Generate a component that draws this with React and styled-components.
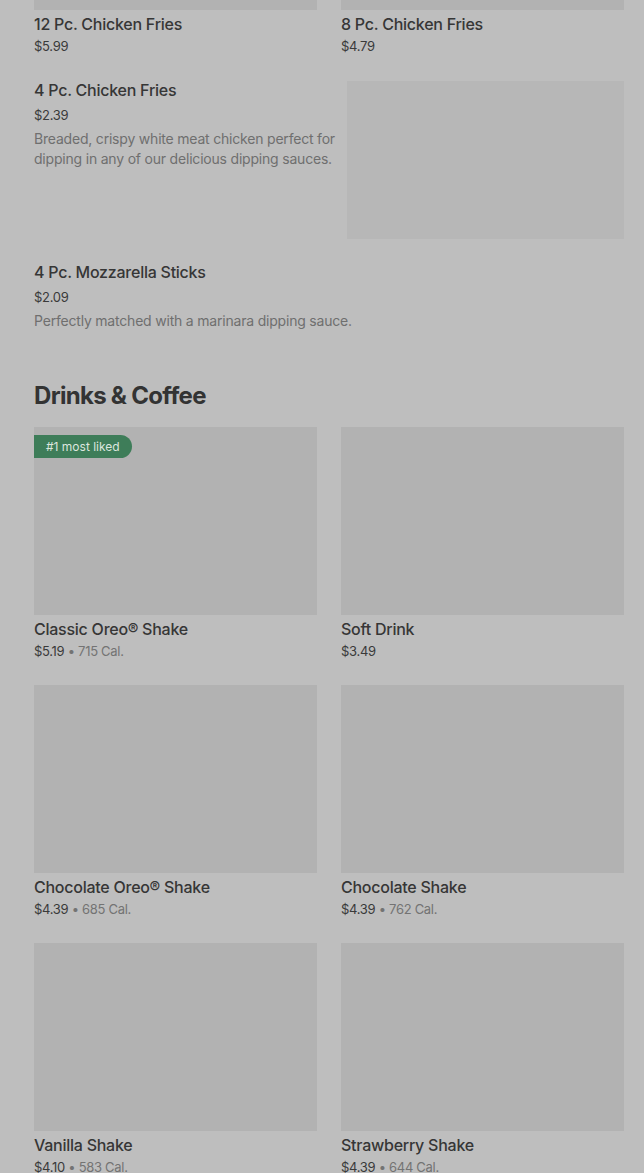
import React from 'react';
import styled, { createGlobalStyle } from 'styled-components';

const GlobalStyle = createGlobalStyle`
  html, body {
    margin: 0;
    padding: 0;
    background: #bebebe;
    overflow: hidden;
  }
  body {
    font-family: Inter, "Noto Sans", "Liberation Sans", sans-serif;
    color: #383838;
  }
`;

const topRow = [
  { name: '12 Pc. Chicken Fries', price: '$5.99' },
  { name: '8 Pc. Chicken Fries', price: '$4.79' },
];

const listItems = [
  {
    name: '4 Pc. Chicken Fries',
    price: '$2.39',
    desc: 'Breaded, crispy white meat chicken perfect for dipping in any of our delicious dipping sauces.',
    image: true,
  },
  {
    name: '4 Pc. Mozzarella Sticks',
    price: '$2.09',
    desc: 'Perfectly matched with a marinara dipping sauce.',
    image: false,
  },
];

const drinks = [
  { name: 'Classic Oreo® Shake', price: '$5.19', cal: '715 Cal.', badge: '#1 most liked' },
  { name: 'Soft Drink', price: '$3.49' },
  { name: 'Chocolate Oreo® Shake', price: '$4.39', cal: '685 Cal.' },
  { name: 'Chocolate Shake', price: '$4.39', cal: '762 Cal.' },
  { name: 'Vanilla Shake', price: '$4.10', cal: '583 Cal.' },
  { name: 'Strawberry Shake', price: '$4.39', cal: '644 Cal.' },
];

function Card({ item }) {
  return (
    <CardBox>
      <Thumb>
        {item.badge && <Badge>{item.badge}</Badge>}
      </Thumb>
      <Name>{item.name}</Name>
      <PriceLine>
        {item.price}
        {item.cal && <Cal> • {item.cal}</Cal>}
      </PriceLine>
    </CardBox>
  );
}

function App() {
  return (
    <>
      <GlobalStyle />
      <Page>
        <Grid>
          {topRow.map((item) => <Card key={item.name} item={item} />)}
        </Grid>

        <List>
          {listItems.map((item) => (
            <ListItem key={item.name}>
              <ListText>
                <Name>{item.name}</Name>
                <ListPrice>{item.price}</ListPrice>
                <Desc>{item.desc}</Desc>
              </ListText>
              {item.image && <SideImage />}
            </ListItem>
          ))}
        </List>

        <SectionTitle>Drinks &amp; Coffee</SectionTitle>
        <Grid>
          {drinks.map((item) => <Card key={item.name} item={item} />)}
        </Grid>
      </Page>
    </>
  );
}

const Page = styled.div`
  display: flex;
  flex-direction: column;
  padding: 0 20px 0 34px;
  margin-top: -178px;
`;

const Grid = styled.div`
  display: grid;
  grid-template-columns: 1fr 1fr;
  column-gap: 24px;
  row-gap: 24px;
`;

const CardBox = styled.div`
  display: flex;
  flex-direction: column;
`;

const Thumb = styled.div`
  position: relative;
  height: 188px;
  background: #b2b2b2;
`;

const Badge = styled.div`
  position: absolute;
  left: 0;
  top: 8px;
  height: 23px;
  padding: 0 12px 0 12px;
  display: flex;
  align-items: center;
  background: #3e7d59;
  color: #dce6df;
  font-size: 12px;
  border-radius: 0 12px 12px 0;
`;

const Name = styled.div`
  margin-top: 4px;
  font-size: 16px;
  line-height: 20px;
  font-weight: 500;
  letter-spacing: -0.25px;
  color: #363636;
`;

const PriceLine = styled.div`
  margin-top: 2px;
  font-size: 13px;
  line-height: 20px;
  letter-spacing: -0.3px;
  color: #3a3a3a;
`;

const Cal = styled.span`
  color: #737373;
`;

const List = styled.div`
  display: flex;
  flex-direction: column;
  gap: 23px;
  margin-top: 24px;
`;

const ListItem = styled.div`
  display: flex;
  gap: 12px;
`;

const ListText = styled.div`
  flex: 1;
  display: flex;
  flex-direction: column;
  & > ${Name} {
    margin-top: 0;
  }
`;

const ListPrice = styled.div`
  margin-top: 5px;
  font-size: 13px;
  line-height: 20px;
  letter-spacing: -0.3px;
  color: #3a3a3a;
`;

const Desc = styled.div`
  margin-top: 4px;
  font-size: 14px;
  line-height: 20px;
  letter-spacing: -0.2px;
  color: #6f6f6f;
`;

const SideImage = styled.div`
  width: 277px;
  height: 158px;
  margin-top: 1px;
  background: #b7b7b7;
`;

const SectionTitle = styled.h2`
  margin: 49px 0 15px;
  font-size: 24px;
  line-height: 32px;
  font-weight: 700;
  letter-spacing: -0.7px;
  color: #333333;
`;

export default App;
